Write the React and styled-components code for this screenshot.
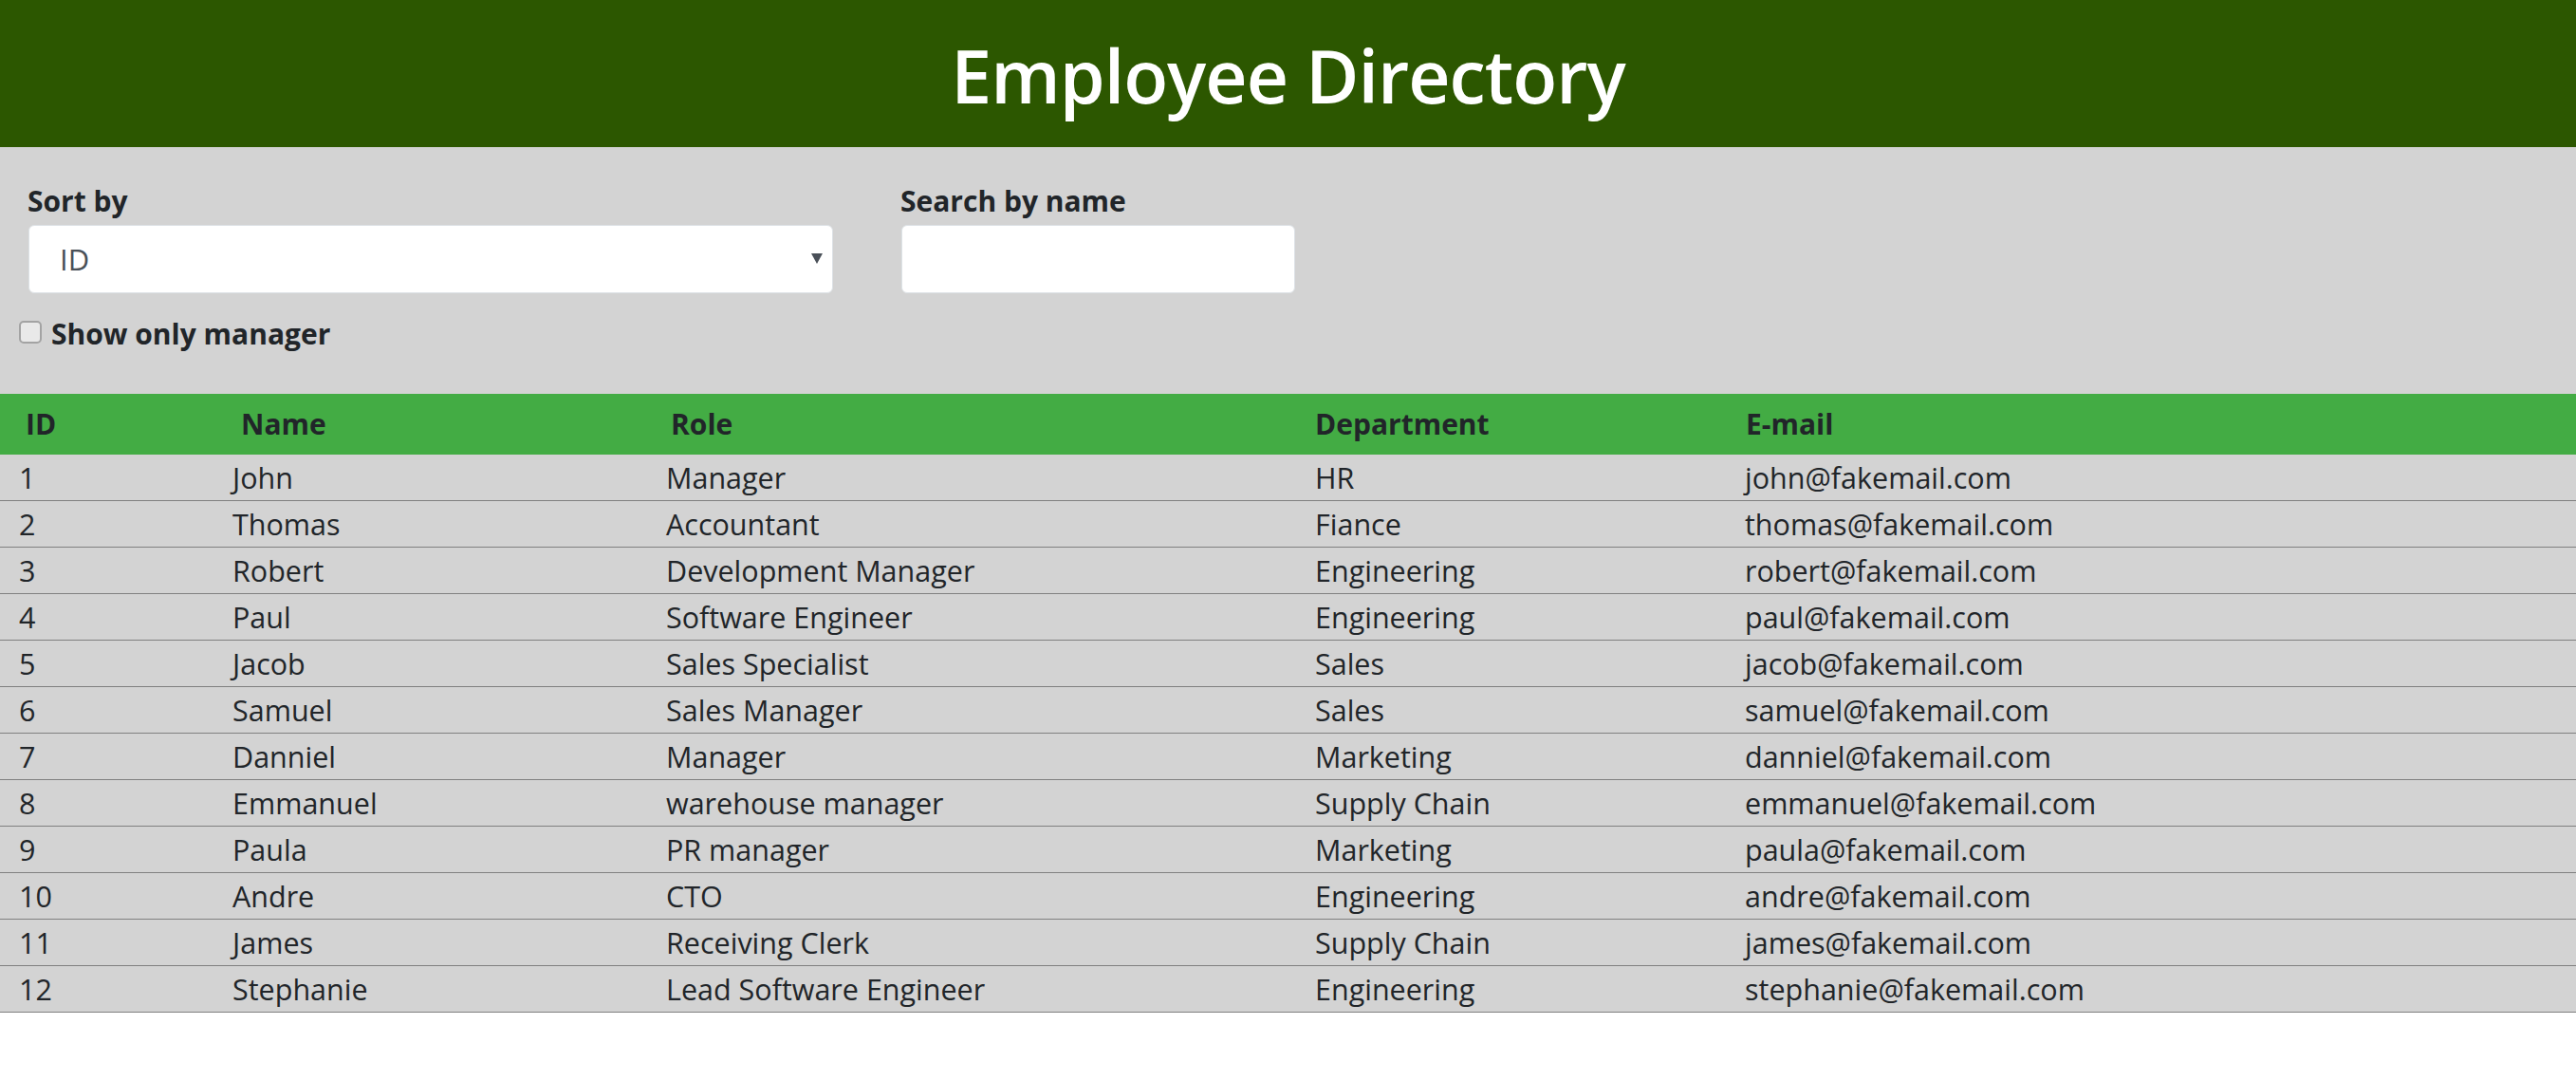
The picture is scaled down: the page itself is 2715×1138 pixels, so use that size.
import React, { useState } from 'react';
import styled, { createGlobalStyle } from 'styled-components';

const employees = [
  { id: 1, name: 'John', role: 'Manager', department: 'HR', email: 'john@fakemail.com' },
  { id: 2, name: 'Thomas', role: 'Accountant', department: 'Fiance', email: 'thomas@fakemail.com' },
  { id: 3, name: 'Robert', role: 'Development Manager', department: 'Engineering', email: 'robert@fakemail.com' },
  { id: 4, name: 'Paul', role: 'Software Engineer', department: 'Engineering', email: 'paul@fakemail.com' },
  { id: 5, name: 'Jacob', role: 'Sales Specialist', department: 'Sales', email: 'jacob@fakemail.com' },
  { id: 6, name: 'Samuel', role: 'Sales Manager', department: 'Sales', email: 'samuel@fakemail.com' },
  { id: 7, name: 'Danniel', role: 'Manager', department: 'Marketing', email: 'danniel@fakemail.com' },
  { id: 8, name: 'Emmanuel', role: 'warehouse manager', department: 'Supply Chain', email: 'emmanuel@fakemail.com' },
  { id: 9, name: 'Paula', role: 'PR manager', department: 'Marketing', email: 'paula@fakemail.com' },
  { id: 10, name: 'Andre', role: 'CTO', department: 'Engineering', email: 'andre@fakemail.com' },
  { id: 11, name: 'James', role: 'Receiving Clerk', department: 'Supply Chain', email: 'james@fakemail.com' },
  { id: 12, name: 'Stephanie', role: 'Lead Software Engineer', department: 'Engineering', email: 'stephanie@fakemail.com' },
];

const GlobalStyle = createGlobalStyle`
  body {
    margin: 0;
    background: #fff;
    color: #212529;
    font-family: "Open Sans", "Noto Sans", sans-serif;
  }
`;

const Header = styled.header`
  height: 155px;
  background: #2c5700;
  display: flex;
  align-items: center;
  justify-content: center;
  padding-top: 4px;
  box-sizing: border-box;
  h1 {
    margin: 0;
    color: #fff;
    font-size: 77px;
    font-weight: 600;
    letter-spacing: -1px;
  }
`;

const Controls = styled.section`
  background: #d3d3d3;
  padding: 34px 20px 41px;
`;

const FieldRow = styled.div`
  display: flex;
  gap: 71px;
  padding-left: 9px;
`;

const Field = styled.div`
  width: ${p => p.w}px;
  display: flex;
  flex-direction: column;
`;

const Label = styled.label`
  font-size: 30px;
  font-weight: 700;
  line-height: 45px;
  margin-bottom: 3px;
`;

const SelectWrap = styled.div`
  position: relative;
  margin-left: 1px;
  &::after {
    content: '';
    position: absolute;
    right: 11px;
    top: 30px;
    border-left: 6px solid transparent;
    border-right: 6px solid transparent;
    border-top: 11px solid #4a5058;
    pointer-events: none;
  }
`;

const Select = styled.select`
  appearance: none;
  width: 100%;
  height: 72px;
  border: 1px solid #dde2e6;
  border-radius: 6px;
  background: #fff;
  padding: 0 32px;
  font-family: inherit;
  font-size: 31px;
  color: #495057;
  outline: none;
`;

const TextInput = styled.input`
  box-sizing: border-box;
  height: 72px;
  margin-left: 1px;
  border: 1px solid #dde2e6;
  border-radius: 6px;
  background: #fff;
  padding: 0 20px;
  font-family: inherit;
  font-size: 30px;
  outline: none;
`;

const CheckRow = styled.label`
  display: flex;
  align-items: center;
  margin-top: 20px;
  font-size: 30px;
  font-weight: 700;
  line-height: 45px;
`;

const Checkbox = styled.input`
  appearance: none;
  width: 24px;
  height: 24px;
  margin: -3px 10px 0 0;
  border: 2px solid #a3a3a3;
  border-radius: 5px;
  background: #e9e9e9;
  box-sizing: border-box;
  &:checked {
    background: #0075ff;
    border-color: #0075ff;
  }
`;

const columns = {
  head: '227px 453px 679px 454px 1fr',
  body: '225px 457px 684px 453px 1fr',
};

const Row = styled.div`
  display: grid;
  grid-template-columns: ${p => columns[p.kind]};
  padding-left: ${p => (p.kind === 'head' ? 27 : 20)}px;
  background: ${p => (p.kind === 'head' ? '#43ac44' : '#d3d3d3')};
  height: ${p => (p.kind === 'head' ? 64 : 48)}px;
  line-height: ${p => (p.kind === 'head' ? 64 : 48)}px;
  font-size: ${p => (p.kind === 'head' ? 30 : 30.5)}px;
  font-weight: ${p => (p.kind === 'head' ? 700 : 400)};
  border-bottom: ${p => (p.kind === 'head' ? 'none' : '1px solid #808080')};
  white-space: nowrap;
`;

export default function App() {
  const [sort, setSort] = useState('id');
  const [query, setQuery] = useState('');
  const [managersOnly, setManagersOnly] = useState(false);

  const rows = employees
    .filter(e => e.name.toLowerCase().includes(query.toLowerCase()))
    .filter(e => !managersOnly || e.role.toLowerCase().includes('manager'))
    .sort((a, b) => (sort === 'id' ? a.id - b.id : String(a[sort]).localeCompare(String(b[sort]))));

  return (
    <>
      <GlobalStyle />
      <Header>
        <h1>Employee Directory</h1>
      </Header>
      <Controls>
        <FieldRow>
          <Field w={849}>
            <Label htmlFor="sort">Sort by</Label>
            <SelectWrap>
              <Select id="sort" value={sort} onChange={e => setSort(e.target.value)}>
                <option value="id">ID</option>
                <option value="name">Name</option>
                <option value="role">Role</option>
                <option value="department">Department</option>
              </Select>
            </SelectWrap>
          </Field>
          <Field w={416}>
            <Label htmlFor="search">Search by name</Label>
            <TextInput id="search" value={query} onChange={e => setQuery(e.target.value)} />
          </Field>
        </FieldRow>
        <CheckRow>
          <Checkbox type="checkbox" checked={managersOnly} onChange={e => setManagersOnly(e.target.checked)} />
          Show only manager
        </CheckRow>
      </Controls>
      <div>
        <Row kind="head">
          <span>ID</span>
          <span>Name</span>
          <span>Role</span>
          <span>Department</span>
          <span>E-mail</span>
        </Row>
        {rows.map(e => (
          <Row kind="body" key={e.id}>
            <span>{e.id}</span>
            <span>{e.name}</span>
            <span>{e.role}</span>
            <span>{e.department}</span>
            <span>{e.email}</span>
          </Row>
        ))}
      </div>
    </>
  );
}
